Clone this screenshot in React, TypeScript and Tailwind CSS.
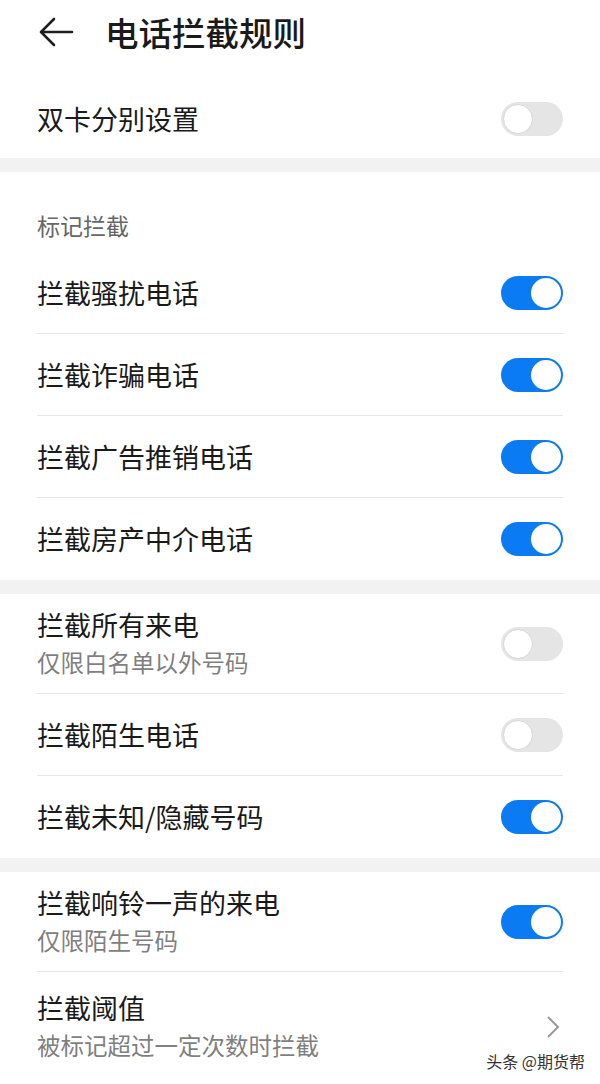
const Toggle = ({ on }: { on: boolean }) => {
    return (
        <div className={`relative w-[62px] h-[34px] rounded-full shrink-0 ${on ? 'bg-[#0a7bf2]' : 'bg-[#e5e5e5]'}`}>
            <div className={`absolute top-[2px] w-[30px] h-[30px] rounded-full bg-white ${on ? 'right-[2px]' : 'left-[2px] border border-[#d6d6d6]'}`} />
        </div>
    );
};

const Row = ({ title, sub, on, divider = true, chevron = false, tall = false }: { title: string; sub?: string; on?: boolean; divider?: boolean; chevron?: boolean; tall?: boolean }) => {
    const h = tall ? 'h-[110px]' : sub ? 'h-[100px]' : 'h-[82px]';
    return (
        <div className="px-[37px]">
            <div className={`flex items-center justify-between ${h} ${divider ? 'border-b border-[#e6e6e6]' : ''}`}>
                <div className="flex flex-col">
                    <p className="text-[27px] leading-[34px] text-[#1a1a1a]">{title}</p>
                    {sub && <p className="text-[23.5px] leading-[36px] mt-[2px] text-[#7f7f7f]">{sub}</p>}
                </div>
                {chevron ? (
                    <svg width="16" height="24" viewBox="0 0 16 24" className="mr-[2px]">
                        <path d="M3 2 L13 12 L3 22" fill="none" stroke="#9a9a9a" strokeWidth="2" />
                    </svg>
                ) : (
                    <Toggle on={!!on} />
                )}
            </div>
        </div>
    );
};

const Band = () => <div className="h-[14px] bg-[#f2f2f2]" />;

export default function App() {
    return (
        <div className="relative w-[600px] h-[1084px] bg-white overflow-hidden" style={{ fontFamily: '"Noto Sans CJK SC", "Noto Sans", sans-serif' }}>
            <div className="flex items-center h-[64px] pl-[38px]">
                <svg width="36" height="32" viewBox="0 0 36 32">
                    <path d="M34 16 H4 M16 3 L3 16 L16 29" fill="none" stroke="#1f1f1f" strokeWidth="2.6" strokeLinecap="round" strokeLinejoin="round" />
                </svg>
                <p className="ml-[31px] text-[33.5px] leading-[40px] font-medium text-[#1a1a1a]">电话拦截规则</p>
            </div>
            <div className="pt-[16px] h-[94px] px-[37px] flex items-center justify-between">
                <p className="text-[27px] leading-[34px] text-[#1a1a1a]">双卡分别设置</p>
                <Toggle on={false} />
            </div>
            <Band />
            <div className="h-[80px] px-[37px] pt-[40px]">
                <p className="text-[23px] leading-[26px] text-[#666666]">标记拦截</p>
            </div>
            <Row title="拦截骚扰电话" on />
            <Row title="拦截诈骗电话" on />
            <Row title="拦截广告推销电话" on />
            <Row title="拦截房产中介电话" on divider={false} />
            <Band />
            <Row title="拦截所有来电" sub="仅限白名单以外号码" on={false} />
            <Row title="拦截陌生电话" on={false} />
            <Row title="拦截未知/隐藏号码" on divider={false} />
            <Band />
            <Row title="拦截响铃一声的来电" sub="仅限陌生号码" on />
            <Row title="拦截阈值" sub="被标记超过一定次数时拦截" chevron divider={false} tall />
            <p className="absolute right-[15px] bottom-[12px] text-[16px] leading-[22px] text-[#333333]" style={{ textShadow: '0 0 2px #fff, 0 0 2px #fff' }}>头条 @期货帮</p>
        </div>
    );
}
